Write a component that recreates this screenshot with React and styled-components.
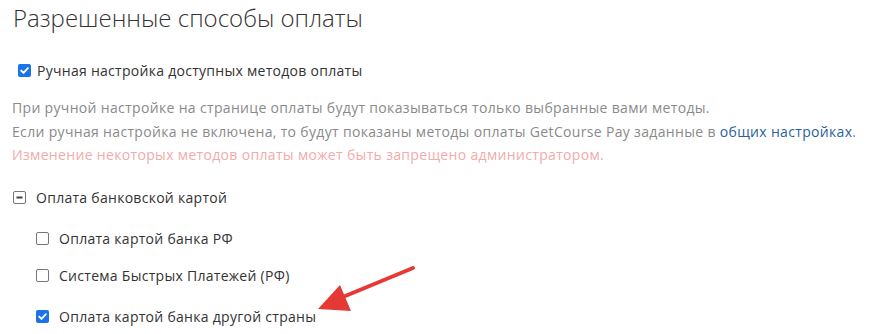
import React from "react";
import styled, { createGlobalStyle } from "styled-components";

const Global = createGlobalStyle`
  html, body { margin: 0; padding: 0; background: #fff; }
  body { font-family: "Open Sans", "Liberation Sans", sans-serif; color: #333; }
`;

const Page = styled.div`
  position: relative;
  width: 875px;
  height: 334px;
  overflow: hidden;
  padding: 2px 0 0 12px;
  box-sizing: border-box;
`;

const Title = styled.h1`
  margin: 0 0 0 1px;
  font-size: 24px;
  font-weight: 300;
  line-height: 32px;
  letter-spacing: 0px;
  color: #333;
`;

const Row = styled.label`
  display: flex;
  align-items: center;
  gap: ${(p) => p.$gap || 6}px;
  height: 20px;
  margin-left: ${(p) => p.$indent || 0}px;
  margin-top: ${(p) => p.$top || 0}px;
  font-size: 14px;
  letter-spacing: 0.28px;
  color: #333;
`;

const Box = styled.span`
  display: inline-flex;
  align-items: center;
  justify-content: center;
  width: 13px;
  height: 13px;
  box-sizing: border-box;
  border-radius: 2px;
  flex: none;
  background: ${(p) => (p.$checked ? "#1a73e8" : "#fff")};
  border: ${(p) => (p.$checked ? "none" : "1px solid #767676")};
`;

const Info = styled.div`
  margin-top: 16px;
  font-size: 14px;
  line-height: 23.5px;
  letter-spacing: 0.33px;
  color: #8a8a8a;
`;

const Link = styled.a`
  color: #2a5f9e;
  text-decoration: none;
`;

const Warn = styled.div`
  color: #f2aaaa;
`;

const Arrow = styled.svg`
  position: absolute;
  left: 0;
  top: 0;
  pointer-events: none;
`;

function Check({ checked, minus }) {
  return (
    <Box $checked={checked}>
      {checked && (
        <svg width="11" height="11" viewBox="0 0 11 11">
          <path d="M2.2 5.6 L4.5 7.9 L8.9 3.2" fill="none" stroke="#fff" strokeWidth="1.9" strokeLinecap="round" strokeLinejoin="round" />
        </svg>
      )}
      {minus && (
        <svg width="9" height="9" viewBox="0 0 9 9">
          <rect x="1.5" y="3.5" width="6" height="2" fill="#444" />
        </svg>
      )}
    </Box>
  );
}

export default function App() {
  return (
    <>
      <Global />
      <Page>
        <Title>Разрешенные способы оплаты</Title>
        <Row $indent={6} $top={26}>
          <Check checked />
          Ручная настройка доступных методов оплаты
        </Row>
        <Info>
          <div>При ручной настройке на странице оплаты будут показываться только выбранные вами методы.</div>
          <div>
            Если ручная настройка не включена, то будут показаны методы оплаты GetCourse Pay заданные в{" "}
            <Link>общих настройках</Link>.
          </div>
          <Warn>Изменение некоторых методов оплаты может быть запрещено администратором.</Warn>
        </Info>
        <Row $indent={1} $top={21} $gap={10}>
          <Check minus />
          Оплата банковской картой
        </Row>
        <Row $indent={24} $top={21} $gap={10}>
          <Check />
          Оплата картой банка РФ
        </Row>
        <Row $indent={24} $top={17} $gap={10}>
          <Check />
          Система Быстрых Платежей (РФ)
        </Row>
        <Row $indent={24} $top={21} $gap={10}>
          <Check checked />
          Оплата картой банка другой страны
        </Row>
        <Arrow width="875" height="334" viewBox="0 0 875 334">
          <line x1="413" y1="268" x2="338" y2="299" stroke="#e53935" strokeWidth="4" strokeLinecap="round" />
          <polygon points="318,309 340,285 351,311" fill="#e53935" />
        </Arrow>
      </Page>
    </>
  );
}
